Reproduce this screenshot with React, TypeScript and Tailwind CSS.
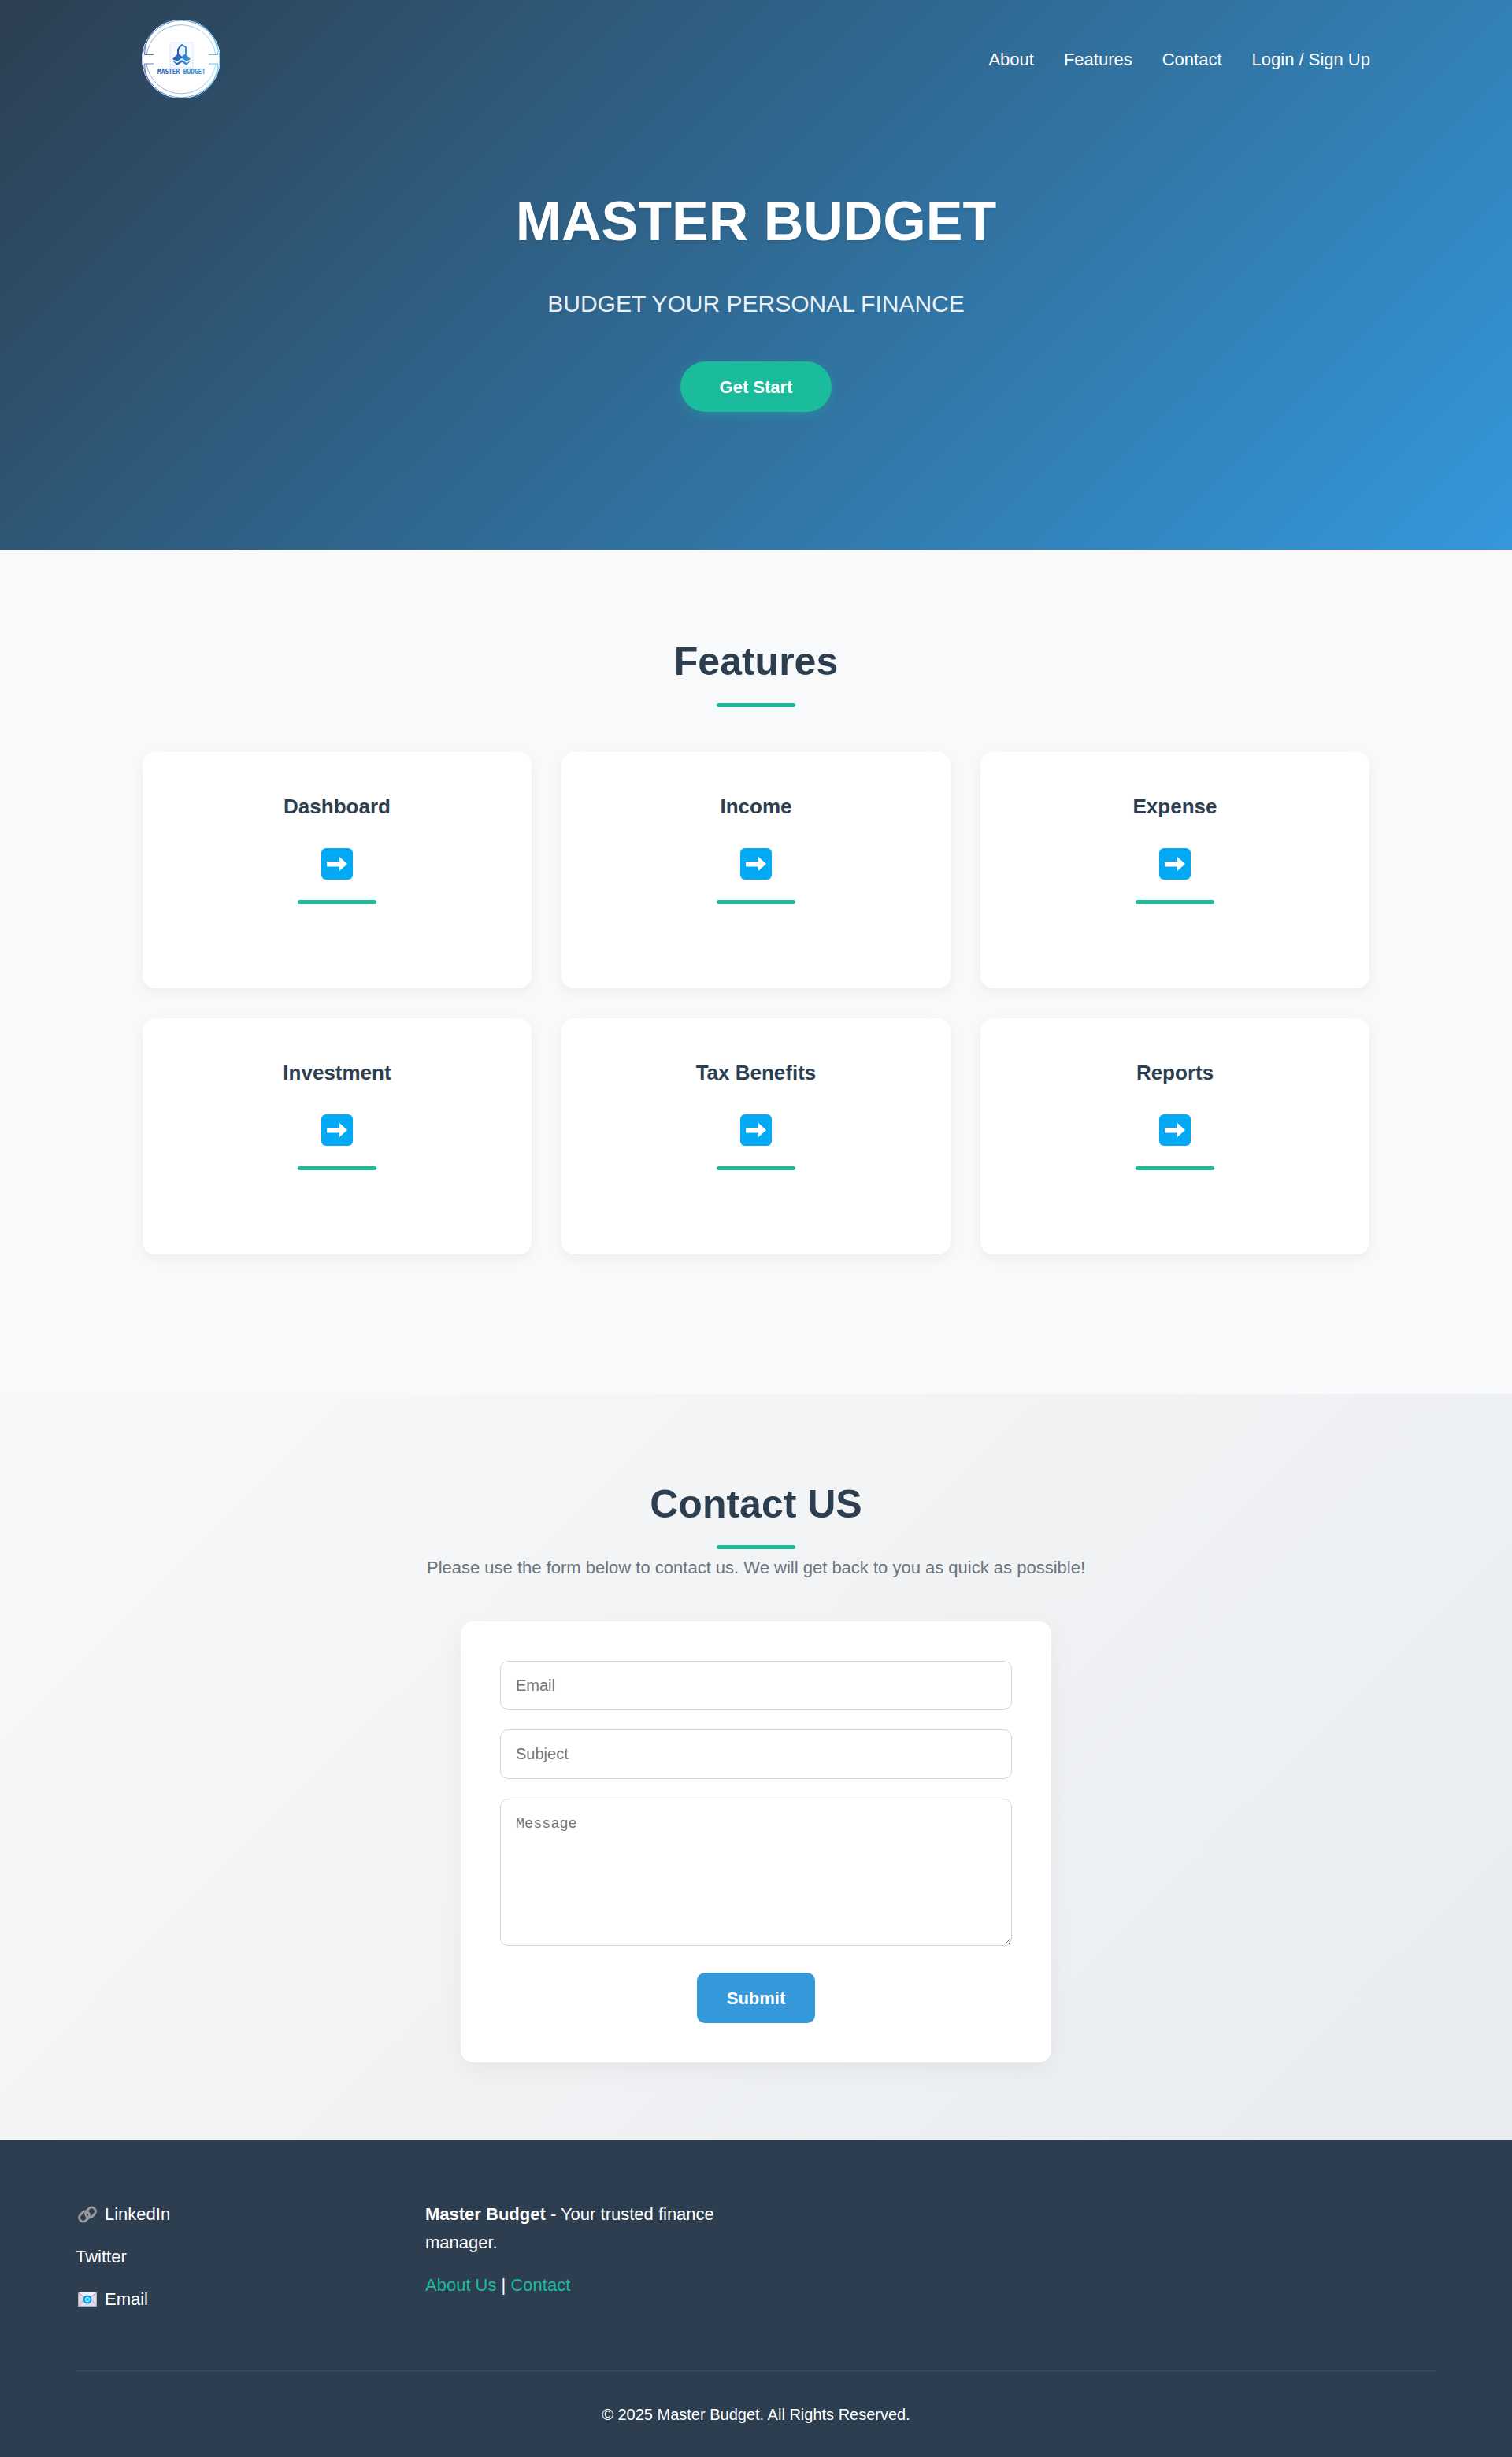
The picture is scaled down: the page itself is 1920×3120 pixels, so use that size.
import React from "react";

const features = ["Dashboard", "Income", "Expense", "Investment", "Tax Benefits", "Reports"];

const Logo = () => (
  <div className="w-[100px] h-[100px] rounded-full bg-white">
    <svg width="100" height="100" viewBox="0 0 100 100">
      <defs>
        <linearGradient id="ring" x1="0" y1="0" x2="1" y2="0">
          <stop offset="0" stopColor="#2b4fa8" />
          <stop offset="1" stopColor="#38b6e8" />
        </linearGradient>
        <linearGradient id="cube" x1="0" y1="0" x2="1" y2="0">
          <stop offset="0" stopColor="#2a52b0" />
          <stop offset="1" stopColor="#2f9fe0" />
        </linearGradient>
      </defs>
      <circle cx="50" cy="50" r="49" fill="none" stroke="url(#ring)" strokeWidth="0.8" />
      <path d="M15 44.5 H3.5 A46.5 46.5 0 0 1 96.5 44.5 H85" fill="none" stroke="url(#ring)" strokeWidth="0.8" />
      <path d="M6 44.5 A44.5 44.5 0 0 1 94 44.5" fill="none" stroke="url(#ring)" strokeWidth="0.5" />
      <path d="M15 56 H3.5 A46.5 46.5 0 0 0 96.5 56 H85" fill="none" stroke="url(#ring)" strokeWidth="0.8" />
      <path d="M6 56 A44.5 44.5 0 0 0 94 56" fill="none" stroke="url(#ring)" strokeWidth="0.5" />
      <rect x="36" y="29" width="29" height="32" fill="#f8faff" stroke="#c9d6fb" strokeWidth="0.6" />
      <path d="M51 32 L56 35 V44 L51 48 L46 44 V38 L48 35 Z" fill="#e8f0ff" stroke="url(#cube)" strokeWidth="2" />
      <path d="M45 44 L39 50 L45 53 L51 49 L57 53 L62 50 L56 44 L51 48 Z" fill="url(#cube)" />
      <path d="M39 52 L45 58 L51 54 L57 58 L62 52 L57 55 L51 51 L45 55 Z" fill="url(#cube)" />
      <text x="50.5" y="69" textAnchor="middle" fontSize="8" fontWeight="700" fontFamily="'DejaVu Sans Mono', monospace" fill="url(#cube)" textLength="61" lengthAdjust="spacingAndGlyphs">MASTER BUDGET</text>
    </svg>
  </div>
);

const ArrowIcon = () => (
  <svg width="40" height="40" viewBox="0 0 40 40">
    <rect x="0" y="0" width="40" height="40" rx="6" fill="#03a9f4" />
    <path d="M8 17 H23 V11 L33 20 L23 29 V23.5 H8 Q7 23.5 7 22.5 V18 Q7 17 8 17 Z" fill="#fff" />
  </svg>
);

const LinkEmoji = () => (
  <svg width="24" height="24" viewBox="0 0 24 24" fill="none" stroke="#9a9a9a" strokeWidth="3">
    <rect x="11" y="2.5" width="10" height="14" rx="5" transform="rotate(45 16 9.5)" />
    <rect x="3" y="7.5" width="10" height="14" rx="5" transform="rotate(45 8 14.5)" />
  </svg>
);

const MailEmoji = () => (
  <svg width="24" height="18" viewBox="0 0 24 18">
    <rect x="0" y="0" width="24" height="18" fill="#e3dbe8" stroke="#7d8799" strokeWidth="1" />
    <path d="M0 0 L12 9 L24 0" fill="#f2edf5" stroke="#9c95ad" strokeWidth="1" />
    <path d="M0 18 L8 8 M24 18 L16 8" stroke="#b9b0c6" strokeWidth="1" />
    <circle cx="12" cy="9" r="5.5" fill="#03a9f4" />
    <circle cx="12" cy="9" r="2.5" fill="none" stroke="#fff" strokeWidth="1" />
  </svg>
);

export default function App() {
  return (
    <div className="font-['Liberation_Sans',Arial,sans-serif] text-[#2c3e50]">
      <header className="h-[698px] bg-[linear-gradient(135deg,#2c3e50,#3498db)] text-white">
        <nav className="w-[1560px] mx-auto flex items-center justify-between pt-[25px]">
          <Logo />
          <ul className="flex items-center gap-[38px] text-[22px]">
            <li>About</li>
            <li>Features</li>
            <li>Contact</li>
            <li>Login / Sign Up</li>
          </ul>
        </nav>
        <div className="flex flex-col items-center pt-[115px]">
          <h1 className="text-[70px] leading-[82px] font-bold [text-shadow:0_2px_4px_rgba(0,0,0,0.1)]">MASTER BUDGET</h1>
          <p className="text-[30px] leading-[34px] mt-[47px] opacity-90">BUDGET YOUR PERSONAL FINANCE</p>
          <button className="mt-[56px] w-[192px] h-[64px] rounded-full bg-[#1abc9c] font-bold text-[22px] shadow-[0_4px_15px_rgba(26,188,156,0.3)]">
            Get Start
          </button>
        </div>
      </header>

      <section className="h-[1072px] bg-[#f8f9fa] pt-[114px]">
        <h2 className="text-center text-[50px] leading-[56px] font-bold">Features</h2>
        <div className="w-[100px] h-[5px] rounded bg-[#1abc9c] mx-auto mt-[25px]" />
        <div className="w-[1558px] mx-auto mt-[57px] grid grid-cols-3 gap-[38px]">
          {features.map((title) => (
            <div key={title} className="h-[300px] rounded-[16px] bg-white shadow-[0_5px_15px_rgba(0,0,0,0.05)] flex flex-col items-center pt-[54px]">
              <h3 className="text-[26px] leading-[30px] font-bold">{title}</h3>
              <div className="mt-[38px]">
                <ArrowIcon />
              </div>
              <div className="w-[100px] h-[5px] rounded bg-[#1abc9c] mt-[26px]" />
            </div>
          ))}
        </div>
      </section>

      <section className="h-[948px] bg-[linear-gradient(135deg,#f8f9fa,#e9ecef)] pt-[110px]">
        <h2 className="text-center text-[50px] leading-[60px] font-bold">Contact US</h2>
        <div className="w-[100px] h-[5px] rounded bg-[#1abc9c] mx-auto mt-[22px]" />
        <p className="text-center text-[22px] leading-[24px] text-[#6c757d] mt-[12px]">
          Please use the form below to contact us. We will get back to you as quick as possible!
        </p>
        <form className="w-[750px] h-[560px] mx-auto mt-[56px] rounded-[16px] bg-white shadow-[0_10px_30px_rgba(0,0,0,0.05)] px-[50px] pt-[50px] flex flex-col">
          <input placeholder="Email" className="h-[62px] rounded-[10px] border border-[#ced4da] px-[19px] text-[20px] placeholder:text-[#757575] outline-none" />
          <input placeholder="Subject" className="h-[63px] mt-[25px] rounded-[10px] border border-[#ced4da] px-[19px] text-[20px] placeholder:text-[#757575] outline-none" />
          <textarea placeholder="Message" className="h-[187px] mt-[25px] rounded-[10px] border border-[#ced4da] px-[19px] py-[18px] text-[18.5px] font-['Liberation_Mono',monospace] placeholder:text-[#757575] outline-none" />
          <button type="button" className="self-center mt-[34px] w-[150px] h-[64px] rounded-[10px] bg-[#3498db] text-white font-bold text-[22px]">
            Submit
          </button>
        </form>
      </section>

      <footer className="h-[402px] bg-[#2c3e50] text-white px-[96px] pt-[64px]">
        <div className="h-[229px] flex border-b border-[#3e5060]">
          <ul className="w-[444px] text-[22px] leading-[24px] flex flex-col gap-[30px] pt-[18px]">
            <li className="flex items-center gap-[10px] h-[24px] pl-[3px]"><LinkEmoji />LinkedIn</li>
            <li className="h-[24px]">Twitter</li>
            <li className="flex items-center gap-[10px] h-[24px] pl-[3px]"><MailEmoji />Email</li>
          </ul>
          <div className="w-[400px] text-[22px]">
            <p className="leading-[36px] pt-[12px]"><b>Master Budget</b> - Your trusted finance manager.</p>
            <p className="mt-[18px] leading-[36px]"><span className="text-[#1abc9c]">About Us</span> | <span className="text-[#1abc9c]">Contact</span></p>
          </div>
        </div>
        <p className="text-center text-[20px] leading-[22px] mt-[44px]">© 2025 Master Budget. All Rights Reserved.</p>
      </footer>
    </div>
  );
}
